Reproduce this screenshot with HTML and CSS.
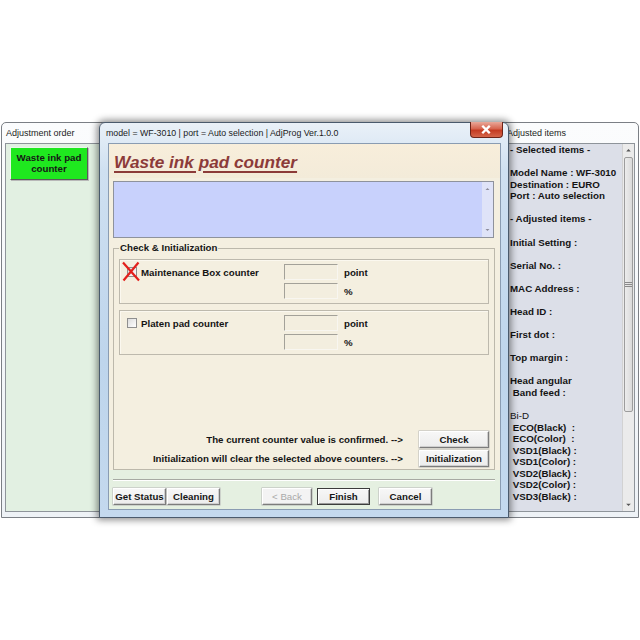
FILE: index.html
```html
<!DOCTYPE html>
<html>
<head>
<meta charset="utf-8">
<title>Waste ink pad counter</title>
<link rel="stylesheet" href="styles.css">
</head>
<body>
<div class="desk">
  <div class="win win-left">
    <div class="win-title">Adjustment order</div>
    <div class="win-client client-green">
      <div class="step-btn">Waste ink pad<br>counter</div>
    </div>
  </div>

  <div class="win win-right">
    <div class="win-title">Adjusted items</div>
    <div class="win-client client-items">
      <div class="items-text"><b>- Selected items -

Model Name : WF-3010
Destination : EURO
Port : Auto selection

- Adjusted items -

Initial Setting :

Serial No. :

MAC Address :

Head ID :

First dot :

Top margin :

Head angular
 Band feed :
</b>
<span class="reg">Bi-D</span>
<b> ECO(Black)  :
 ECO(Color)  :
 VSD1(Black) :
 VSD1(Color) :
 VSD2(Black) :
 VSD2(Color) :
 VSD3(Black) :</b></div>
      <div class="vscroll">
        <div class="sb-btn"><svg width="12" height="12" viewBox="0 0 12 12"><path d="M3.5 7.5 L6 5 L8.5 7.5Z" fill="#555"/></svg></div>
        <div class="sb-track"><div class="sb-thumb"><svg width="7" height="6" viewBox="0 0 7 6"><path d="M0 0.5H7M0 2.5H7M0 4.5H7" stroke="#8a8a8a" stroke-width="1"/></svg></div></div>
        <div class="sb-btn"><svg width="12" height="12" viewBox="0 0 12 12"><path d="M3.5 4.5 L6 7 L8.5 4.5Z" fill="#555"/></svg></div>
      </div>
    </div>
  </div>

  <div class="dlg">
    <div class="dlg-title">
      <span>model = WF-3010 | port = Auto selection | AdjProg Ver.1.0.0</span>
      <div class="close-btn"><svg width="33" height="16" viewBox="0 0 33 16"><path d="M13.5 4.5 L19.5 10.5 M19.5 4.5 L13.5 10.5" stroke="#fff" stroke-width="2.4" stroke-linecap="square"/></svg></div>
    </div>
    <div class="dlg-client">
      <div class="dlg-header"><span class="dlg-heading">Waste ink pad counter</span></div>
      <div class="msgbox">
        <div class="msg-area"></div>
        <div class="msg-scroll">
          <svg width="11" height="12" viewBox="0 0 11 12"><path d="M3.5 7 L5.5 5 L7.5 7Z" fill="#8c8c9c"/></svg>
          <svg width="11" height="12" viewBox="0 0 11 12"><path d="M3.5 5 L5.5 7 L7.5 5Z" fill="#8c8c9c"/></svg>
        </div>
      </div>
      <fieldset class="group">
        <legend>Check &amp; Initialization</legend>
        <div class="cbox">
          <div class="icon-cell">
            <span class="chk"></span>
            <svg class="redx" width="20" height="21" viewBox="0 0 20 21"><path d="M2 1.5 L18 19.5 M17.5 1.5 L2.5 19.5" stroke="#e3201c" stroke-width="2.2"/></svg>
          </div>
          <div class="lbl">Maintenance Box counter</div>
          <div class="field"></div>
          <div class="unit">point</div>
          <div class="field r2"></div>
          <div class="unit r2">%</div>
        </div>
        <div class="cbox second">
          <div class="icon-cell"><span class="chk"></span></div>
          <div class="lbl">Platen pad counter</div>
          <div class="field"></div>
          <div class="unit">point</div>
          <div class="field r2"></div>
          <div class="unit r2">%</div>
        </div>
        <div class="act-row first">
          <span>The current counter value is confirmed. --&gt;</span>
          <div class="btn act-btn">Check</div>
        </div>
        <div class="act-row">
          <span>Initialization will clear the selected above counters. --&gt;</span>
          <div class="btn act-btn">Initialization</div>
        </div>
      </fieldset>
      <div class="footer">
        <div class="sep"></div>
        <div class="btn-row">
          <div class="btn b-get">Get Status</div>
          <div class="btn b-clean">Cleaning</div>
          <div class="btn b-back disabled">&lt; Back</div>
          <div class="btn b-finish default">Finish</div>
          <div class="btn b-cancel">Cancel</div>
        </div>
      </div>
    </div>
  </div>
</div>
</body>
</html>
```

FILE: styles.css
```css
* { box-sizing: border-box; }
html, body { margin: 0; padding: 0; background: #ffffff; }
body { font-family: "Liberation Sans", Arial, sans-serif; color: #141414; }

.desk { position: relative; width: 640px; height: 640px; overflow: hidden; background: #fff; }

/* background windows */
.win {
  position: absolute;
  top: 122px;
  height: 396px;
  background: linear-gradient(#fbfcfd, #eef2f6);
  border: 1px solid #7b7f85;
  border-radius: 5px 5px 0 0;
  display: flex;
  flex-direction: column;
}
.win-left { left: 1px; width: 130px; }
.win-right { left: 470px; width: 169px; }
.win-title {
  height: 20px;
  line-height: 20px;
  font-size: 9px;
  padding-left: 4px;
  color: #1c1c1c;
  white-space: nowrap;
}
.win-right .win-title { padding-left: 36px; }
.win-client {
  margin: 0 3px 5px 3px;
  flex: 1;
  border: 1px solid #8e949a;
}
.client-green { background: #e2f0e2; padding: 3px 0 0 4px; }
.step-btn {
  width: 78px;
  height: 33px;
  background: #1fe81f;
  border: 1px solid;
  border-color: #e8f8e8 #5a5a5a #5a5a5a #e8f8e8;
  box-shadow: 1px 1px 0 #b8b8b8;
  font-size: 9.7px;
  font-weight: bold;
  line-height: 11px;
  text-align: center;
  padding-top: 4px;
  color: #161616;
}

.client-items { background: #dcdfe8; display: flex; }
.items-text {
  flex: 1;
  white-space: pre;
  font-size: 9.75px;
  line-height: 11.57px;
  padding-left: 35px;
  padding-top: 0;
  color: #141414;
}
.items-text .reg { font-weight: normal; }
.vscroll {
  width: 12px;
  display: flex;
  flex-direction: column;
  background: #ebebeb;
  border-left: 1px solid #d2d2d2;
}
.sb-btn { height: 12px; display: flex; align-items: center; justify-content: center; }
.sb-track { flex: 1; padding: 1px 0 87px 0; display: flex; }
.sb-thumb {
  flex: 1;
  margin: 0 1px;
  background: linear-gradient(to right, #ececec, #dadada);
  border: 1px solid #9c9c9c;
  border-radius: 2px;
  display: flex;
  align-items: center;
  justify-content: center;
}

/* main dialog */
.dlg {
  position: absolute;
  left: 99px;
  top: 122px;
  width: 410px;
  height: 396px;
  border: 1px solid #4a5a6c;
  border-radius: 6px 6px 0 0;
  background: linear-gradient(#eaf1f8, #cfe0f1 12%, #bed5ec 60%, #c4d9ee);
  box-shadow: 0 0 7px 2px rgba(0, 0, 0, 0.45);
  display: flex;
  flex-direction: column;
}
.dlg-title {
  height: 20px;
  display: flex;
  align-items: flex-start;
  font-size: 8.8px;
  color: #1a1a1a;
  white-space: nowrap;
}
.dlg-title span { padding-left: 6px; line-height: 20px; }
.close-btn {
  margin-left: auto;
  margin-right: 5px;
  margin-top: -1px;
  width: 33px;
  height: 16px;
  border: 1px solid #6e2418;
  border-top: none;
  border-radius: 0 0 4px 4px;
  background: linear-gradient(#e9a899, #d7654f 45%, #c43b22 55%, #d5654a);
  display: flex;
}
.close-btn svg { margin-left: -1px; }

.dlg-client {
  margin: 0 7px 0 8px;
  height: 367px;
  border: 1px solid #8a9cb2;
  background: #f4efe0;
  display: flex;
  flex-direction: column;
}
.dlg-header {
  height: 34px;
  background: linear-gradient(#f8eedb, #f3ebd9);
  padding: 8px 0 0 5px;
}
.dlg-heading {
  font-size: 17.2px;
  line-height: 20px;
  font-weight: bold;
  font-style: italic;
  color: #8c3b39;
  text-decoration: underline;
  text-decoration-thickness: 2px;
  text-underline-offset: 3px;
}

.msgbox {
  margin: 3px 0 0 4px;
  width: 381px;
  height: 57px;
  border: 1px solid #8e929c;
  background: #c8d1fc;
  display: flex;
}
.msg-area { flex: 1; }
.msg-scroll {
  width: 11px;
  background: #dfe3f8;
  display: flex;
  flex-direction: column;
  justify-content: space-between;
  padding: 1px 0;
}

.group {
  margin: 4px 0 0 4px;
  width: 382px;
  padding: 5px 5px 2px 5px;
  border: 1px solid #bcb8ab;
  background: #f4efe0;
  min-width: 0;
}
.group legend {
  font-size: 9.7px;
  line-height: 12px;
  font-weight: bold;
  padding: 0 1px;
  color: #161616;
}

.cbox {
  height: 45px;
  border: 1px solid #bdb9ad;
  box-shadow: inset 1px 1px 0 #fbf8ef;
  padding-top: 4px;
  display: grid;
  grid-template-columns: 21px 143px 54px auto;
  grid-template-rows: 16px 16px;
  row-gap: 3px;
  align-items: center;
  font-size: 9.7px;
  font-weight: bold;
}
.cbox.second { margin-top: 6px; }
.icon-cell {
  position: relative;
  grid-row: 1;
  grid-column: 1;
  height: 16px;
  display: flex;
  align-items: center;
}
.chk {
  display: block;
  width: 10px;
  height: 10px;
  margin-left: 7px;
  border: 1px solid #8f8f8f;
  background: linear-gradient(135deg, #dcdcdc, #ffffff);
}
.redx { position: absolute; left: 1px; top: -3px; }
.lbl { grid-row: 1; grid-column: 2; }
.field {
  grid-column: 3;
  grid-row: 1;
  height: 16px;
  border: 1px solid;
  border-color: #a3a199 #f8f6f0 #f8f6f0 #a3a199;
  background: #f3eedf;
}
.unit { grid-column: 4; grid-row: 1; padding-left: 6px; }
.field.r2, .unit.r2 { grid-row: 2; }

.act-row {
  display: flex;
  justify-content: flex-end;
  align-items: center;
  gap: 16px;
  font-size: 9.7px;
  font-weight: bold;
  margin-top: 2px;
}
.act-row.first { margin-top: 76px; }

.btn {
  height: 17px;
  line-height: 15px;
  text-align: center;
  font-size: 9.7px;
  font-weight: bold;
  color: #161616;
  background: linear-gradient(#f7f7f7, #ececec);
  border: 1px solid;
  border-color: #ffffff #7c7c7c #7c7c7c #ffffff;
  box-shadow: inset -1px -1px 0 #cfcfcf, 0 0 0 0.5px #b4b4b4;
  white-space: nowrap;
}
.act-btn { width: 70px; }

.footer {
  flex: 1;
  background: #e5f0e1;
  padding-top: 9px;
}
.sep {
  margin: 0 5px 0 4px;
  height: 2px;
  border-top: 1px solid #a7aaa3;
  border-bottom: 1px solid #ffffff;
}
.btn-row {
  display: flex;
  margin-top: 7px;
  padding-left: 4px;
}
.b-get { width: 53px; }
.b-clean { width: 53px; margin-left: 1px; }
.b-back { width: 50px; margin-left: 42px; }
.b-finish { width: 53px; margin-left: 5px; }
.b-cancel { width: 53px; margin-left: 9px; }
.btn.disabled { color: #a9a9a9; font-weight: normal; background: #f3f3f3; }
.btn.default { border-color: #3c3c3c; box-shadow: inset 1px 1px 0 #ffffff, inset -1px -1px 0 #9a9a9a; }
```
